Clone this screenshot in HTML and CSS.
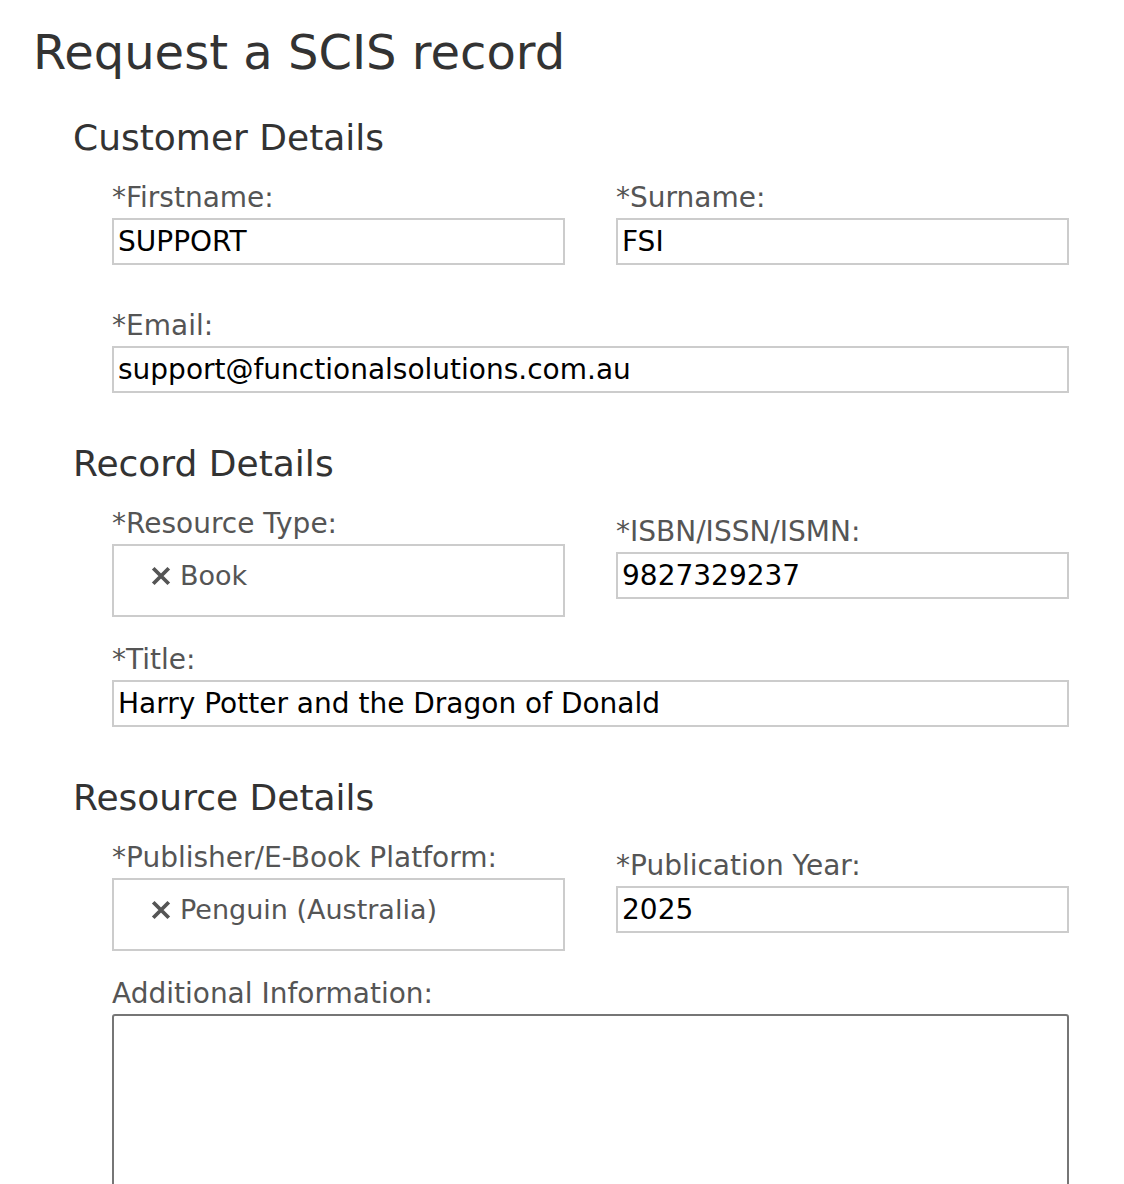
FILE: index.html
```html
<!DOCTYPE html>
<html lang="en">
<head>
  <meta charset="UTF-8" />
  <meta name="viewport" content="width=device-width, initial-scale=1.0" />
  <title>Request a SCIS record</title>
  <link rel="stylesheet" href="styles.css">
</head>
<body>
  <h1>Request a SCIS record</h1>

  <form class="request-form">
    <section class="group">
      <h2>Customer Details</h2>
      <div class="row">
        <div class="field">
          <label for="firstname">*Firstname:</label>
          <input type="text" id="firstname" value="SUPPORT" />
        </div>
        <div class="field">
          <label for="surname">*Surname:</label>
          <input type="text" id="surname" value="FSI" />
        </div>
      </div>
      <div class="row">
        <div class="field wide">
          <label for="email">*Email:</label>
          <input type="text" id="email" value="support@functionalsolutions.com.au" />
        </div>
      </div>
    </section>

    <section class="group">
      <h2>Record Details</h2>
      <div class="row">
        <div class="field">
          <label>*Resource Type:</label>
          <div class="tag-box">
            <span class="tag">
              <svg class="remove" viewBox="0 0 18 18"><path d="M2 2 L16 16 M16 2 L2 16" /></svg>
              Book
            </span>
          </div>
        </div>
        <div class="field">
          <label for="isbn">*ISBN/ISSN/ISMN:</label>
          <input type="text" id="isbn" value="9827329237" />
        </div>
      </div>
      <div class="row">
        <div class="field wide">
          <label for="title">*Title:</label>
          <input type="text" id="title" value="Harry Potter and the Dragon of Donald" />
        </div>
      </div>
    </section>

    <section class="group">
      <h2>Resource Details</h2>
      <div class="row">
        <div class="field">
          <label>*Publisher/E-Book Platform:</label>
          <div class="tag-box">
            <span class="tag">
              <svg class="remove" viewBox="0 0 18 18"><path d="M2 2 L16 16 M16 2 L2 16" /></svg>
              Penguin (Australia)
            </span>
          </div>
        </div>
        <div class="field">
          <label for="year">*Publication Year:</label>
          <input type="text" id="year" value="2025" />
        </div>
      </div>
      <div class="row">
        <div class="field wide">
          <label for="info">Additional Information:</label>
          <textarea id="info"></textarea>
        </div>
      </div>
    </section>
  </form>
</body>
</html>
```

FILE: styles.css
```css
body {
  margin: 0;
  padding: 22px 0 0 33px;
  font-family: 'DejaVu Sans', sans-serif;
  color: #333;
  background: #fff;
}
h1 {
  margin: 0 0 34px 0;
  font-size: 48px;
  font-weight: 400;
  line-height: 60px;
  color: #333;
}
.request-form {
  padding-left: 40px;
}
.group h2 {
  margin: 31px 0 23px 0;
  font-size: 36px;
  font-weight: 400;
  line-height: 44px;
  color: #333;
}
.group:first-child h2 {
  margin-top: 0;
}
.row {
  display: grid;
  grid-template-columns: 453px 453px;
  column-gap: 51px;
  align-items: end;
  margin: 0 0 28px 39px;
}
.field label {
  display: block;
  font-size: 28px;
  line-height: 30px;
  margin-bottom: 5px;
  color: #555;
}
.field.wide {
  grid-column: 1 / 3;
}
.field input {
  display: block;
  box-sizing: border-box;
  width: 100%;
  height: 47px;
  margin: 0 0 18px 0;
  padding: 0 4px;
  border: 2px solid #ccc;
  border-radius: 0;
  font-family: inherit;
  font-size: 28px;
  color: #000;
  background: #fff;
  outline: none;
}
.tag-box {
  box-sizing: border-box;
  height: 73px;
  padding: 15px 0 0 37px;
  border: 2px solid #ccc;
}
.tag {
  display: flex;
  align-items: center;
  gap: 9px;
  font-size: 27px;
  line-height: 30px;
  color: #555;
}
.tag .remove {
  width: 20px;
  height: 20px;
  fill: none;
  stroke: #555;
  stroke-width: 3.4;
  stroke-linecap: butt;
}
.field textarea {
  display: block;
  box-sizing: border-box;
  width: 100%;
  height: 220px;
  border: 2px solid #767676;
  border-radius: 3px;
  resize: none;
  font-family: inherit;
  font-size: 28px;
}
```
